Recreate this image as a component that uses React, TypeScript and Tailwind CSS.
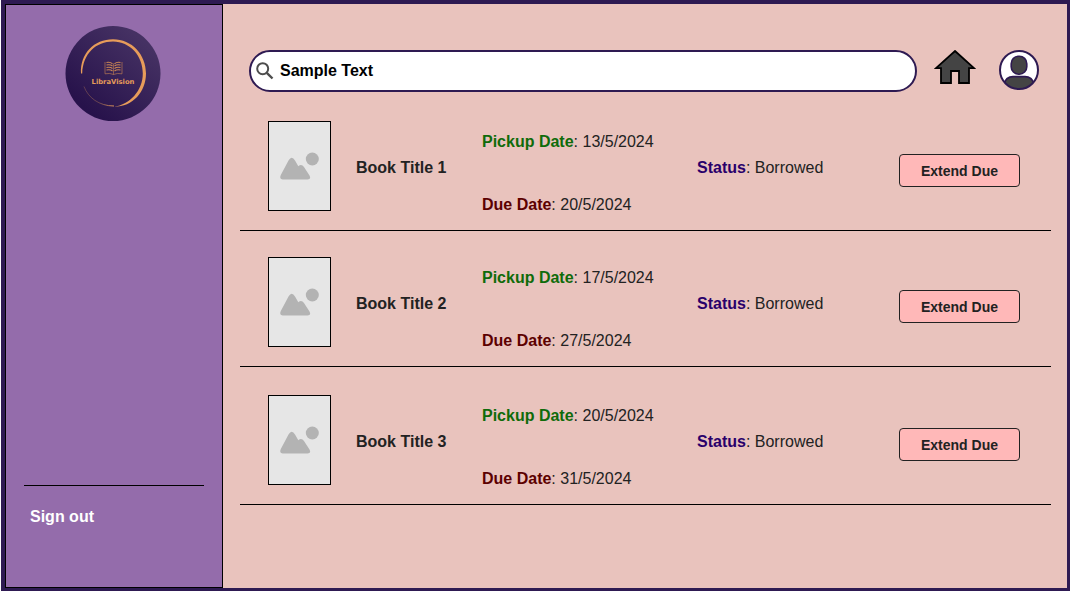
import React from "react";

type Loan = { title: string; pickup: string; due: string; status: string };

const loans: Loan[] = [
  { title: "Book Title 1", pickup: "13/5/2024", due: "20/5/2024", status: "Borrowed" },
  { title: "Book Title 2", pickup: "17/5/2024", due: "27/5/2024", status: "Borrowed" },
  { title: "Book Title 3", pickup: "20/5/2024", due: "31/5/2024", status: "Borrowed" },
];

function Logo() {
  return (
    <svg viewBox="0 0 96 96" className="size-24" role="img" aria-label="LibraVision">
      <defs>
        <linearGradient id="disc" x1="0.2" y1="0.85" x2="0.8" y2="0.15">
          <stop offset="0" stopColor="#27124b" />
          <stop offset="1" stopColor="#453163" />
        </linearGradient>
        <linearGradient id="fade" gradientUnits="userSpaceOnUse" x1="17" y1="60" x2="50" y2="80">
          <stop offset="0" stopColor="#a87055" stopOpacity="0.4" />
          <stop offset="0.6" stopColor="#a87055" stopOpacity="0.5" />
          <stop offset="1" stopColor="#e79c5a" />
        </linearGradient>
      </defs>
      <circle cx="48" cy="47.500" r="47.5" fill="url(#disc)" />
      <path
        d="M16 47.500 C15 27.500 29 13.200 48 13.200 C67 13.200 81 28.500 81 47.500 C81 65.500 68 80.800 49 80.800 C65 78.500 77.800 64.500 77.800 47.500 C77.800 29.500 65 15.800 48 15.500 C31 15.500 18 27.500 17.200 47.500 Z"
        fill="#e79c5a"
      />
      <path d="M19 60.500 C23 71.500 34 80 49 80" fill="none" stroke="url(#fade)" strokeWidth="1" />
      <g fill="none" stroke="#c98553">
        <path
          d="M40 36 V47.800 Q45 46.800 48.500 48.500 Q52 46.800 57 47.800 V36 M48.500 37.500 V48.500"
          strokeWidth="0.600"
        />
        <path
          d="M41.500 36.500 Q45.500 35.800 47.500 37.800 M41.500 39 Q45.500 38.300 47.500 40 M41.500 41.500 Q45.500 40.800 47.500 42.500 M41.500 44 Q45.500 43.300 47.500 45 M55.500 36.500 Q51.500 35.800 49.500 37.800 M55.500 39 Q51.500 38.300 49.500 40 M55.500 41.500 Q51.500 40.800 49.500 42.500 M55.500 44 Q51.500 43.300 49.500 45"
          strokeWidth="1.100"
        />
      </g>
      <text
        x="48"
        y="58"
        textAnchor="middle"
        fill="#e79c5a"
        fontFamily="'DejaVu Sans', sans-serif"
        fontWeight="700"
        fontSize="6.800"
      >
        LibraVision
      </text>
    </svg>
  );
}

function SearchIcon() {
  return (
    <svg viewBox="0 0 18 18" className="size-[18px] shrink-0" aria-hidden="true">
      <g fill="none" stroke="#4d4d4d" strokeWidth="2">
        <circle cx="6.700" cy="6.700" r="5.500" />
        <path d="M10.800 10.800 L16.500 16.500" strokeWidth="2.400" />
      </g>
    </svg>
  );
}

function HomeIcon() {
  return (
    <svg viewBox="0 0 42 34" className="block h-[34px] w-[42px]" aria-hidden="true">
      <path
        d="M21 1 L40 18.200 H35 V33 H25 V21 H17 V33 H7 V18.200 H2 Z"
        fill="#444"
        stroke="#000"
        strokeWidth="1.800"
      />
    </svg>
  );
}

function AvatarIcon() {
  return (
    <svg viewBox="0 0 40 40" className="block size-10" aria-hidden="true">
      <defs>
        <clipPath id="face">
          <circle cx="20" cy="20" r="19" />
        </clipPath>
      </defs>
      <circle cx="20" cy="20" r="19" fill="#fff" />
      <g clipPath="url(#face)" fill="#444" stroke="#2e1a52" strokeWidth="1.600">
        <rect x="12.200" y="6.200" width="15.600" height="18" rx="7.500" />
        <path d="M5 34 Q7 26.600 14 26.600 H26 Q33 26.600 35 34 V42 H5 Z" />
      </g>
      <circle cx="20" cy="20" r="19" fill="none" stroke="#2e1a52" strokeWidth="2" />
    </svg>
  );
}

function Cover() {
  return (
    <div className="flex h-[90px] w-[63px] items-center justify-center border border-black bg-[#e6e6e6]">
      <svg viewBox="0 0 39 28" className="h-7 w-[39px]" role="img" aria-label="Book cover">
        <g fill="#b3b3b3">
          <circle cx="32.300" cy="7" r="6.500" />
          <path d="M0.800 23 L8.500 8.500 Q11.700 3 15 8.500 L18.300 14.200 Q21.500 11.500 24 15 L29.500 23.500 Q31.500 27.500 27.500 27.500 H3 Q-1 27.500 0.800 23 Z" />
        </g>
      </svg>
    </div>
  );
}

function LoanRow({ loan }: { loan: Loan }) {
  return (
    <li className="grid grid-cols-[88px_126fr_215fr_202fr_121px] items-start border-b border-black pt-[26px] pr-[31px] pb-[15px] pl-7 last:pt-7">
      <Cover />
      <h2 className="pt-[37px] font-bold">{loan.title}</h2>
      <div className="flex flex-col gap-[43px] pt-[11px]">
        <p>
          <b className="text-[#0f6b0a]">Pickup Date</b>: {loan.pickup}
        </p>
        <p>
          <b className="text-[#5c0000]">Due Date</b>: {loan.due}
        </p>
      </div>
      <p className="pt-[37px]">
        <b className="text-[#29006b]">Status</b>: {loan.status}
      </p>
      <button
        type="button"
        className="mt-[33px] h-[33px] rounded-[4px] border border-[#222] bg-[#ffb8b8] text-sm font-bold"
      >
        Extend Due
      </button>
    </li>
  );
}

export default function App() {
  return (
    <div className="min-h-screen bg-white pl-px font-['Liberation_Sans',Arial,sans-serif] text-base leading-5 text-[#222]">
      <div className="flex min-h-screen border-t-4 border-r-[3px] border-b-[3px] border-l-4 border-[#2e1a52] bg-[#e9c3bd]">
        <aside className="flex w-[218px] shrink-0 flex-col border border-black bg-[#946cab] px-[18px] pt-[21px] pb-[60px]">
          <div className="flex justify-center pr-0.5">
            <Logo />
          </div>
          <div className="mt-auto border-t border-black pt-[21px] pl-[6px]">
            <a href="#sign-out" className="font-bold text-white">
              Sign out
            </a>
          </div>
        </aside>
        <main className="min-w-0 flex-1 pr-4 pl-[17px]">
          <header className="flex items-start pt-[46px] pr-3 pl-[9px]">
            <label className="flex h-[42px] flex-1 items-center gap-[6px] rounded-full border-2 border-[#2e1a52] bg-white pr-4 pl-[5px]">
              <SearchIcon />
              <input
                type="text"
                aria-label="Search books"
                defaultValue="Sample Text"
                className="min-w-0 flex-1 bg-transparent font-bold text-black outline-none"
              />
            </label>
            <a href="#home" aria-label="Home" className="ml-[17px]">
              <HomeIcon />
            </a>
            <a href="#profile" aria-label="Profile" className="ml-[23px]">
              <AvatarIcon />
            </a>
          </header>
          <ul className="mt-[3px]">
            {loans.map((loan) => (
              <LoanRow key={loan.title} loan={loan} />
            ))}
          </ul>
        </main>
      </div>
    </div>
  );
}
